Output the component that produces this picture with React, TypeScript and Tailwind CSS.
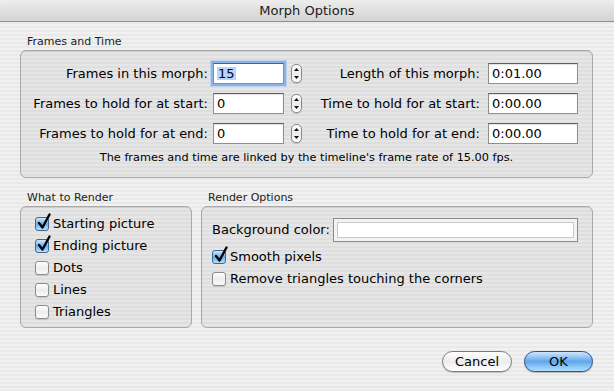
import type { ReactNode } from 'react'

function Field({ value, width, focused }: { value: string; width: string; focused?: boolean }) {
  return (
    <div
      className={`${width} h-[21px] shrink-0 flex items-center pl-[3px] bg-white border border-[#8e8e8e] border-t-[#5f5f5f] text-[13px] leading-none ${
        focused ? 'shadow-[0_0_0_2px_#8db3e2,0_0_0_3px_#bcd3ef]' : 'shadow-[inset_0_1px_1px_rgba(0,0,0,0.12)]'
      }`}
    >
      {focused ? <span className="bg-[#b5d5ff] px-[1px]">{value}</span> : value}
    </div>
  )
}

function Stepper() {
  return (
    <div className="w-[11px] h-[19px] shrink-0 flex flex-col items-center justify-center gap-[5px] rounded-[5px] border border-[#8a8a8a] bg-linear-to-b from-white via-[#ececec] to-white shadow-[0_1px_1px_rgba(0,0,0,0.15)]">
      <svg width="5" height="3" viewBox="0 0 5 3">
        <path d="M0 3 L2.5 0 L5 3 Z" fill="#111" />
      </svg>
      <svg width="5" height="3" viewBox="0 0 5 3">
        <path d="M0 0 L5 0 L2.5 3 Z" fill="#111" />
      </svg>
    </div>
  )
}

function Check({ checked, label }: { checked?: boolean; label: string }) {
  return (
    <div className="h-[22px] flex items-center gap-[4px] text-[13px]">
      <span
        className={`relative w-[14px] h-[14px] shrink-0 rounded-[3px] border ${
          checked
            ? 'border-[#3f6790] bg-linear-to-b from-[#d2e8fc] via-[#68b0ef] to-[#b4e2ff]'
            : 'border-[#8c8c8c] bg-linear-to-b from-white via-[#ededed] to-[#fafafa] shadow-[0_1px_1px_rgba(0,0,0,0.12)]'
        }`}
      >
        {checked && (
          <svg className="absolute left-[1px] -top-[5px]" width="14" height="18" viewBox="0 0 14 18">
            <path d="M2 10 L5.5 14.5 L12.5 1.5" stroke="#050505" strokeWidth="2.4" fill="none" strokeLinecap="round" strokeLinejoin="round" />
          </svg>
        )}
      </span>
      <span>{label}</span>
    </div>
  )
}

function Group({ title, children, className }: { title: string; children: ReactNode; className: string }) {
  return (
    <div className="flex flex-col">
      <div className="pl-[7px] h-[13px] text-[11px] leading-[13px] text-[#1c1c1c]">{title}</div>
      <div className={`mt-[2px] rounded-[6px] border border-[#a9a9a9] bg-black/[0.045] shadow-[inset_0_1px_1px_rgba(0,0,0,0.08)] ${className}`}>
        {children}
      </div>
    </div>
  )
}

export default function App() {
  const rows = [
    { left: 'Frames in this morph:', leftVal: '15', right: 'Length of this morph:', rightVal: '0:01.00', focused: true },
    { left: 'Frames to hold for at start:', leftVal: '0', right: 'Time to hold for at start:', rightVal: '0:00.00' },
    { left: 'Frames to hold for at end:', leftVal: '0', right: 'Time to hold for at end:', rightVal: '0:00.00' },
  ]

  return (
    <div className="w-[614px] h-[391px] flex flex-col overflow-hidden text-black font-['DejaVu_Sans',sans-serif] bg-[image:repeating-linear-gradient(180deg,#f1f1f1_0px,#f1f1f1_2px,#e9e9e9_2px,#e9e9e9_4px)]">
      <div className="h-[22px] shrink-0 flex items-center justify-center rounded-t-[5px] border-b border-[#8f8f8f] bg-linear-to-b from-[#ededed] to-[#d3d3d3] text-[13px] text-[#1a1a1a]">
        Morph Options
      </div>

      <div className="flex flex-col pl-[20px] pr-[21px]">
        <div className="mt-[13px]">
          <Group title="Frames and Time" className="h-[128px] pt-[12px] flex flex-col">
            <div className="flex flex-col gap-[9px]">
              {rows.map(r => (
                <div key={r.left} className="h-[21px] flex items-center text-[13px]">
                  <div className="w-[187px] text-right whitespace-nowrap">{r.left}</div>
                  <div className="ml-[5px]">
                    <Field value={r.leftVal} width="w-[71px]" focused={r.focused} />
                  </div>
                  <div className="ml-[7px]">
                    <Stepper />
                  </div>
                  <div className="w-[178px] text-right whitespace-nowrap">{r.right}</div>
                  <div className="ml-[8px]">
                    <Field value={r.rightVal} width="w-[90px]" />
                  </div>
                </div>
              ))}
            </div>
            <div className="mt-[7px] text-center text-[11.3px] leading-[13px]">
              The frames and time are linked by the timeline's frame rate of 15.00 fps.
            </div>
          </Group>
        </div>

        <div className="mt-[13px] flex gap-[9px]">
          <div className="w-[172px]">
            <Group title="What to Render" className="h-[122px] pt-[6px] pl-[14px]">
              <Check checked label="Starting picture" />
              <Check checked label="Ending picture" />
              <Check label="Dots" />
              <Check label="Lines" />
              <Check label="Triangles" />
            </Group>
          </div>
          <div className="flex-1">
            <Group title="Render Options" className="h-[122px] pt-[11px] pl-[10px]">
              <div className="flex items-center text-[13px]">
                <div className="w-[121px] whitespace-nowrap">Background color:</div>
                <div className="w-[245px] h-[24px] p-[3px] border border-[#8b8b8b] bg-[#f3f3f3]">
                  <div className="h-full bg-white border border-[#c9c9c9]" />
                </div>
              </div>
              <div className="mt-[4px]">
                <Check checked label="Smooth pixels" />
                <Check label="Remove triangles touching the corners" />
              </div>
            </Group>
          </div>
        </div>

        <div className="mt-[23px] flex justify-end gap-[12px] text-[13px]">
          <button className="w-[70px] h-[21px] rounded-full border border-[#7b7b7b] bg-linear-to-b from-white via-[#ececec] to-white shadow-[0_1px_1px_rgba(0,0,0,0.2)]">
            Cancel
          </button>
          <button className="w-[69px] h-[21px] rounded-full border border-[#2d4f8d] bg-linear-to-b from-[#d0e5fb] via-[#5fa7ec] to-[#aee0ff] shadow-[0_1px_1px_rgba(0,0,0,0.25)]">
            OK
          </button>
        </div>
      </div>
    </div>
  )
}
